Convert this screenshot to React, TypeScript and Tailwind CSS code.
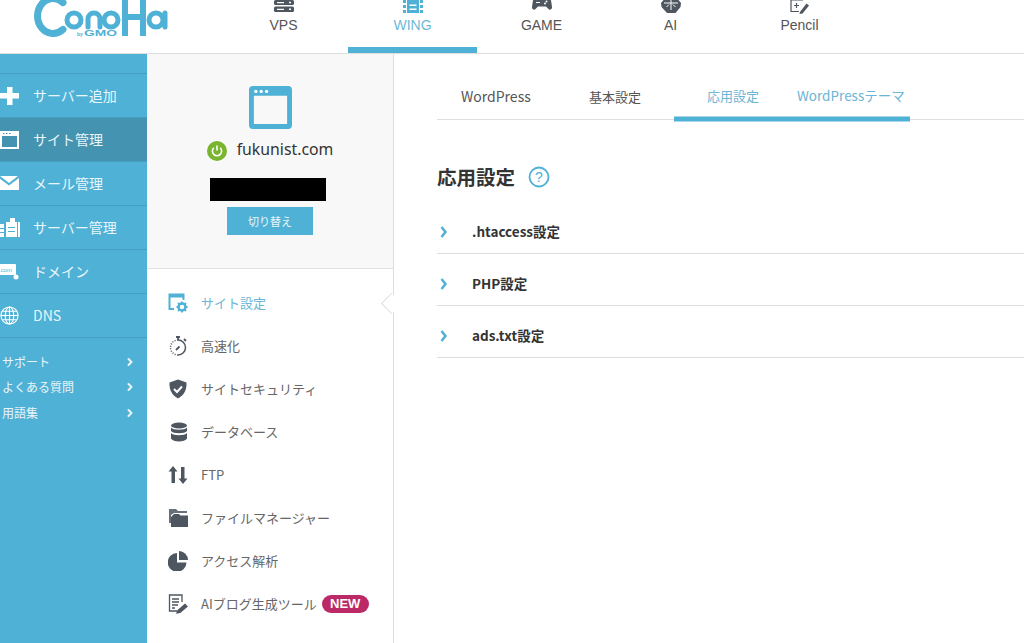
import { ChevronRight } from "lucide-react";

const FONT = "font-['Noto_Sans_CJK_JP','Noto_Sans',sans-serif]";

function Logo() {
  return (
    <svg width="172" height="38" viewBox="0 0 172 38" fill="none" stroke="#4fb1d5" strokeLinecap="round">
      <path d="M63 2.600A15.500 17.500 0 1 0 63 29.400" strokeWidth="7" />
      <circle cx="74" cy="20" r="7" strokeWidth="5" />
      <path d="M88 27V19a6 6 0 0 1 12 0v8" strokeWidth="5" />
      <circle cx="111" cy="20" r="7" strokeWidth="5" />
      <path d="M125 -4V36M143 -4V36M125 17H143" strokeWidth="6" strokeLinecap="butt" />
      <circle cx="156" cy="20" r="7" strokeWidth="5" />
      <path d="M165 13V27" strokeWidth="5" />
      <text x="77" y="36" fontSize="5" fontWeight="700" fill="#4fb1d5" stroke="none" fontFamily="Liberation Sans, sans-serif">by</text>
      <text x="84" y="36" fontSize="9" fontWeight="700" fill="#4fb1d5" stroke="none" fontFamily="Liberation Sans, sans-serif" textLength={33} lengthAdjust="spacingAndGlyphs">GMO</text>
    </svg>
  );
}

function NavIcon({ name, color }: { name: string; color: string }) {
  if (name === "VPS") {
    return (
      <svg width="20" height="14" viewBox="0 0 20 14" fill={color}>
        <path fillRule="evenodd" d="M1.500 0h17a1.500 1.500 0 0 1 1.500 1.500v2a1.500 1.500 0 0 1-1.500 1.500h-17A1.500 1.500 0 0 1 0 3.500v-2A1.500 1.500 0 0 1 1.500 0zM3 2v1.200h7V2zM15 1.800v1.500h2V1.800z" />
        <path fillRule="evenodd" d="M1.500 6.500h17a1.500 1.500 0 0 1 1.500 1.500v2.500a1.500 1.500 0 0 1-1.500 1.500h-17A1.500 1.500 0 0 1 0 10.500V8a1.500 1.500 0 0 1 1.500-1.500zM3 8.700v1.200h7V8.700zM15 8.500V10h2V8.500z" />
      </svg>
    );
  }
  if (name === "WING") {
    return (
      <svg width="20" height="14" viewBox="0 0 20 14" fill={color}>
        <path fillRule="evenodd" d="M4 0h12v13H4zM6.500 4.500v1.500h7V4.500zM6.500 8.500V10h7V8.500z" />
        <path d="M0 0h3v3H0zM0 5h3v3H0zM0 10h3v3H0zM17 0h3v3h-3zM17 5h3v3h-3zM17 10h3v3h-3z" />
      </svg>
    );
  }
  if (name === "GAME") {
    return (
      <svg width="20" height="14" viewBox="0 0 20 14" fill={color}>
        <path d="M4 -3h12c1.800 0 2.800 2 3.300 5l.7 5c.2 2.500-2.200 3.500-3.500 2L14 6.500H6L3.500 9C2.200 10.500-.2 9.500 0 7l.7-5C1.200-1 2.200-3 4-3z" />
        <circle cx="14.500" cy="1.500" r="1" fill="#fff" />
        <circle cx="13" cy="3.500" r="1" fill="#fff" />
        <path d="M4 2.500h4" stroke="#fff" strokeWidth="1" />
      </svg>
    );
  }
  if (name === "AI") {
    return (
      <svg width="20" height="14" viewBox="0 0 20 14" fill={color}>
        <path d="M5 -3h10l5 6-.5 4-5 6H6L.5 7 0 3z" />
        <path d="M10 -3V10M3 3h14M5.500 7L8 4.500M14.500 7L12 4.500" stroke="#fff" strokeWidth="1" fill="none" />
      </svg>
    );
  }
  return (
    <svg width="20" height="14" viewBox="0 0 20 14" fill="none" stroke={color} strokeWidth="1.200">
      <path d="M13 0H1v11.500h8" />
      <path d="M4 5.500h5M6.500 3v5" />
      <path d="M10 12l6.500-8.500 2.500 2-6.500 8-3 .5z" fill={color} stroke="none" />
    </svg>
  );
}

function SideIcon({ name }: { name: string }) {
  const box = "shrink-0 ml-[-3px]";
  if (name === "plus") {
    return (
      <svg width="22" height="22" viewBox="0 0 22 22" fill="#fff" className={box}>
        <path d="M8 2h5.500v6H20v5.500h-6.500V20H8v-6.500H0V8h8z" />
      </svg>
    );
  }
  if (name === "site") {
    return (
      <svg width="22" height="20" viewBox="0 0 22 20" className={box}>
        <path fillRule="evenodd" fill="#fff" d="M1 1h19v18H1zM3 6v11h15V6z" />
        <path d="M4 3h1.500v1H4zM7 3h1.500v1H7zM10 3h1.500v1H10z" fill="#4493b0" />
      </svg>
    );
  }
  if (name === "mail") {
    return (
      <svg width="22" height="16" viewBox="0 0 22 16" fill="#fff" className={box}>
        <path d="M1 0h18l-9 7zM0 2l10 7.500L20 2v12H0z" />
      </svg>
    );
  }
  if (name === "server") {
    return (
      <svg width="22" height="22" viewBox="0 0 22 22" fill="#fff" className={box}>
        <path d="M0 7h5v13H0zM7 5h4V1h5v4h2v15H7zM19 5h2v15h-2z" />
        <path d="M9 10h7v1H9zM9 14h7v1H9zM0 11h5v1H0zM0 15h5v1H0z" fill="#4fb1d5" />
      </svg>
    );
  }
  if (name === "domain") {
    return (
      <svg width="26" height="18" viewBox="0 0 26 18" className="shrink-0 ml-[-5px]">
        <rect x="0" y="1" width="20" height="11" rx="1" fill="#fff" />
        <text x="3" y="9" fontSize="6" fill="#4fb1d5" fontFamily="Liberation Sans, sans-serif">.com</text>
        <circle cx="20" cy="14" r="2.500" fill="#fff" />
      </svg>
    );
  }
  return (
    <svg width="19" height="19" viewBox="0 0 20 20" fill="none" stroke="#fff" strokeWidth="1.200" className={box}>
      <circle cx="10" cy="10" r="9" />
      <ellipse cx="10" cy="10" rx="4.500" ry="9" />
      <path d="M1 10h18M2.500 5.500h15M2.500 14.500h15M10 1v18" />
    </svg>
  );
}

function MenuIcon({ name }: { name: string }) {
  const dark = "#4e5660";
  if (name === "site") {
    return (
      <svg width="20" height="20" viewBox="0 0 20 20" fill="none">
        <path d="M6 16H1.500V1.500h14V7" stroke="#4fb1d5" strokeWidth="2" />
        <path d="M1 1h15v3.500H1z" fill="#4fb1d5" />
        <circle cx="14" cy="14" r="3.500" stroke="#4fb1d5" strokeWidth="2.500" />
        <path d="M14 8.500v2M14 17.500v2M8.500 14h2M17.500 14h2M10 10l1.500 1.500M16.500 16.500l1.500 1.500M18 10l-1.500 1.500M11.500 16.500L10 18" stroke="#4fb1d5" strokeWidth="1.800" />
      </svg>
    );
  }
  if (name === "speed") {
    return (
      <svg width="20" height="20" viewBox="0 0 20 20" fill="none" stroke={dark}>
        <path d="M10 4a7.500 7.500 0 0 1 0 15" strokeWidth="1.500" />
        <path d="M10 4a7.500 7.500 0 0 0 0 15" strokeWidth="1.500" strokeDasharray="1 1.500" />
        <path d="M8 1h4M10 1v3M16 3l2 2" strokeWidth="1.800" />
        <path d="M8 14l3.500-3.500" strokeWidth="1.800" />
      </svg>
    );
  }
  if (name === "shield") {
    return (
      <svg width="20" height="20" viewBox="0 0 20 20">
        <path d="M10 0.500l8.500 3c.3 7-2 12.500-8.500 16C3.500 16 1.200 10.500 1.500 3.500z" fill={dark} />
        <path d="M6 10l3 3 5-5.500" fill="none" stroke="#fff" strokeWidth="2" />
      </svg>
    );
  }
  if (name === "db") {
    return (
      <svg width="18" height="20" viewBox="0 0 18 20" fill={dark} className="ml-[1px]">
        <ellipse cx="9" cy="3.500" rx="8" ry="3" />
        <path d="M1 5.500C3 8.500 15 8.500 17 5.500V9C15 12 3 12 1 9zM1 11c2 3 14 3 16 0v5.500C15 20.500 3 20.500 1 16.500z" />
      </svg>
    );
  }
  if (name === "ftp") {
    return (
      <svg width="20" height="20" viewBox="0 0 20 20" fill={dark}>
        <path d="M5 1l4.500 5.500H7V18H3.500V6.500H0.500zM15 19l-4.500-5.500H13V2h3.500v11.500h3z" />
      </svg>
    );
  }
  if (name === "folder") {
    return (
      <svg width="20" height="18" viewBox="0 0 20 18" fill={dark}>
        <path d="M1 0h7l2 2h9v2H6L3 6v8H1z" opacity="0.85" />
        <path d="M3 8l3-3h5l1.500 1.500H20V18H3z" />
      </svg>
    );
  }
  if (name === "pie") {
    return (
      <svg width="20" height="20" viewBox="0 0 20 20" fill={dark}>
        <path d="M9 2v9.500h9.500A9.400 9.400 0 1 1 9 2z" />
        <path d="M11 0a9 9 0 0 1 9 9h-9z" />
      </svg>
    );
  }
  return (
    <svg width="20" height="20" viewBox="0 0 20 20" fill="none" stroke={dark} strokeWidth="1.300">
      <path d="M14 8V1H1.500v16H9" />
      <path d="M4 5h7M4 8h7M4 11h6M4 14h3" />
      <path d="M10 16.500l7-6 2 2-7 6-3 .5z" fill={dark} />
    </svg>
  );
}

const TOP_NAV = ["VPS", "WING", "GAME", "AI", "Pencil"];

const SIDE_ITEMS = [
  { icon: "plus", label: "サーバー追加" },
  { icon: "site", label: "サイト管理", active: true },
  { icon: "mail", label: "メール管理" },
  { icon: "server", label: "サーバー管理" },
  { icon: "domain", label: "ドメイン" },
  { icon: "dns", label: "DNS" },
];

const MENU = [
  { icon: "site", label: "サイト設定", active: true },
  { icon: "speed", label: "高速化" },
  { icon: "shield", label: "サイトセキュリティ" },
  { icon: "db", label: "データベース" },
  { icon: "ftp", label: "FTP" },
  { icon: "folder", label: "ファイルマネージャー" },
  { icon: "pie", label: "アクセス解析" },
  { icon: "doc", label: "AIブログ生成ツール", badge: true },
];

export default function App() {
  return (
    <div className={`flex h-[643px] w-[1024px] flex-col overflow-hidden bg-white ${FONT}`}>
      <header className="flex h-[54px] shrink-0 border-b border-[#dedede]">
        <div className="w-[219px] shrink-0 overflow-hidden">
          <Logo />
        </div>
        {TOP_NAV.map(name => {
          const active = name === "WING";
          return (
            <div
              key={name}
              className={`flex h-[53px] w-[129px] flex-col items-center border-b-[6px] ${active ? "border-[#4fb1d5] text-[#6cbad8]" : "border-transparent text-[#555]"}`}
            >
              <NavIcon name={name} color={active ? "#4fb1d5" : "#4e5660"} />
              <span className="mt-[1px] font-['Liberation_Sans',sans-serif] text-[14px] leading-[20px]">{name}</span>
            </div>
          );
        })}
      </header>

      <div className="flex min-h-0 flex-1">
        <aside className="w-[147px] shrink-0 bg-[#4fb1d5] text-white">
          <div className="h-[20px] border-b border-[#459fc1]" />
          {SIDE_ITEMS.map(item => (
            <div
              key={item.label}
              className={`flex h-[44px] items-center gap-[11px] border-b border-[#459fc1] text-[14px] ${item.active ? "bg-[#4493b0]" : ""}`}
            >
              <span className="flex w-[22px] shrink-0 justify-center">
                <SideIcon name={item.icon} />
              </span>
              <span className="text-[#e8f5fa]">{item.label}</span>
            </div>
          ))}
          <div className="mt-[11px] flex flex-col">
            {["サポート", "よくある質問", "用語集"].map(label => (
              <div key={label} className="flex h-[25.500px] items-center justify-between pl-[2px] pr-[11px] text-[12px] text-[#e8f5fa]">
                <span>{label}</span>
                <ChevronRight size={12} strokeWidth={4} />
              </div>
            ))}
          </div>
        </aside>

        <nav className="relative w-[247px] shrink-0 border-r border-[#dedede]">
          <div className="flex h-[215px] flex-col items-center border-b border-[#e2e2e2] bg-[#f8f8f8] pt-[32px]">
            <svg width="43" height="43" viewBox="0 0 44 44">
              <path fillRule="evenodd" fill="#4fb1d5" d="M4 0h36a4 4 0 0 1 4 4v36a4 4 0 0 1-4 4H4a4 4 0 0 1-4-4V4a4 4 0 0 1 4-4zM5 10v29h34V10z" />
              <circle cx="7" cy="5.500" r="1.700" fill="#fff" />
              <circle cx="12.500" cy="5.500" r="1.700" fill="#fff" />
              <circle cx="18" cy="5.500" r="1.700" fill="#fff" />
            </svg>
            <div className="mt-[8px] flex h-[24px] items-center gap-[10px]">
              <svg width="20" height="20" viewBox="0 0 20 20" fill="none" className="mt-[4px]">
                <circle cx="10" cy="10" r="10" fill="#7ab52f" />
                <path d="M6.800 6.800a4.600 4.600 0 1 0 6.400 0" stroke="#fff" strokeWidth="1.600" />
                <path d="M10 4.500v5" stroke="#fff" strokeWidth="1.600" />
              </svg>
              <span className="font-['Noto_Sans',sans-serif] text-[15.800px] leading-[20px] text-[#333]">fukunist.com</span>
            </div>
            <div className="ml-[-4px] mt-[17px] h-[23px] w-[116px] bg-black" />
            <button type="button" className="mt-[6px] h-[28px] w-[86px] bg-[#4fb1d5] text-[11px] text-[#e8f5fa]">
              切り替え
            </button>
          </div>

          {/* caret joining the active item to the right panel */}
          <div className="absolute right-[-6px] top-[242px] h-[15px] w-[15px] -rotate-45 border-l border-t border-[#dedede] bg-white" />

          <ul className="flex flex-col pt-[12px]">
            {MENU.map(item => (
              <li key={item.label} className="flex h-[43px] items-center pl-[21px]">
                <span className="flex w-[20px] shrink-0 justify-center">
                  <MenuIcon name={item.icon} />
                </span>
                <span className={`ml-[13px] text-[13px] ${item.active ? "text-[#6cb5d4]" : "text-[#666]"}`}>{item.label}</span>
                {item.badge && (
                  <span className="ml-[5px] flex h-[18px] w-[47px] items-center justify-center rounded-full bg-[#bb2a66] font-['Liberation_Sans',sans-serif] text-[13px] font-bold text-white">
                    NEW
                  </span>
                )}
              </li>
            ))}
          </ul>
        </nav>

        <main className="min-w-0 flex-1 pl-[43px] pt-[23px]">
          <div className="flex h-[43px] items-center border-b border-[#dedede] pb-[3px]">
            <div className="flex h-full w-[119px] items-center pl-[24px] text-[14px] text-[#555]">WordPress</div>
            <div className="flex h-full w-[118px] items-center justify-center text-[13px] text-[#555]">基本設定</div>
            <div className="flex h-[46px] w-[236px] translate-y-[1.500px] items-center border-b-[5px] border-[#4fb1d5] pb-[1px] text-[#6cb5d4]">
              <span className="w-[123px] pl-[33px] text-[13px]">応用設定</span>
              <span className="whitespace-nowrap text-[13.500px]">WordPressテーマ</span>
            </div>
          </div>

          <div className="mt-[42px] flex h-[30px] items-center gap-[13px]">
            <h1 className="text-[19.500px] font-bold text-[#333]">応用設定</h1>
            <svg width="22" height="22" viewBox="0 0 22 22" fill="none">
              <circle cx="11" cy="11" r="9.500" stroke="#4fb1d5" strokeWidth="1.800" />
              <text x="11" y="16" textAnchor="middle" fontSize="14" fill="#4fb1d5" stroke="none" fontFamily="Liberation Sans, sans-serif">?</text>
            </svg>
          </div>

          <div className="mt-[10px] flex flex-col">
            {[".htaccess設定", "PHP設定", "ads.txt設定"].map(label => (
              <div key={label} className="flex h-[52px] items-center border-b border-[#dedede] pt-[8px]">
                <svg width="8" height="12" viewBox="0 0 8 12" fill="none" className="ml-[3px]">
                  <path d="M1.500 1l4 5-4 5" stroke="#4fb1d5" strokeWidth="2.500" />
                </svg>
                <span className="ml-[24px] text-[13.500px] font-semibold text-[#333]">{label}</span>
              </div>
            ))}
          </div>
        </main>
      </div>
    </div>
  );
}
